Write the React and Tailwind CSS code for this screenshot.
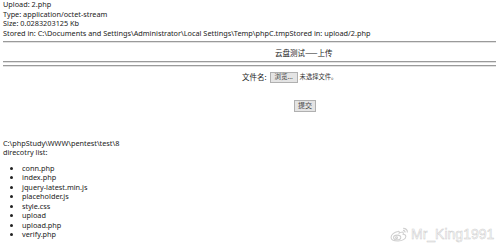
import React from 'react';

const files = [
  'conn.php',
  'index.php',
  'jquery-latest.min.js',
  'placeholder.js',
  'style.css',
  'upload',
  'upload.php',
  'verify.php',
];

const Rule = () => (
  <div className="mx-[3px] h-[2px] border-t border-[#9a9a9a] border-b border-b-[#e2e2e2]" />
);

const WeiboMark = () => (
  <svg width="19" height="15" viewBox="0 0 18 14" fill="none" stroke="#cfcfcf" strokeWidth="1">
    <path d="M7.5 4.2c-3.4 0.6-6.5 3.1-6.5 5.3 0 2.2 3 3.6 6.6 3.6 4 0 7.4-1.9 7.4-4.2 0-1.5-1.6-2-2.6-2.1 0.6-1.1 0.3-2.4-1.6-2-1.2 0.2-2.1 0.9-2.1 0.9 0.4-1.5-0.2-2-1.2-1.5z" />
    <ellipse cx="6.8" cy="9.8" rx="3.4" ry="2.2" />
    <circle cx="6.2" cy="10" r="0.9" />
    <path d="M12.5 1.2c2.3 0 4 1.7 4 3.9" />
    <path d="M12.3 3.1c1.1 0 2 0.9 2 2" />
  </svg>
);

export default function App() {
  return (
    <div className="w-[499px] h-[247px] bg-white text-[#222] text-[7.3px] leading-[9.5px] font-['Noto_Sans','Noto_Sans_CJK_SC',sans-serif] overflow-hidden relative">
      <div className="pl-[3px]">
        <div>Upload: 2.php</div>
        <div>Type: application/octet-stream</div>
        <div>Size: 0.0283203125 Kb</div>
        <div>Stored in: C:\Documents and Settings\Administrator\Local Settings\Temp\phpC.tmpStored in: upload/2.php</div>
      </div>

      <div className="mt-[3px]">
        <Rule />
      </div>
      <div className="pl-[275px] pt-[5px] pb-[3px] text-[7.5px] font-['Noto_Sans_CJK_SC',sans-serif]">云盘测试——上传</div>
      <Rule />
      <div className="mt-[2px]">
        <Rule />
      </div>

      <div className="flex items-center pl-[242px] pt-[5px] text-[7.5px] font-['Noto_Sans_CJK_SC',sans-serif]">
        <span>文件名:</span>
        <span className="ml-[3px] w-[28px] h-[11px] flex items-center justify-center bg-[#e4e4e4] border border-[#b0b0b0] text-[6.5px] text-[#444]">浏览...</span>
        <span className="ml-[2px] text-[6.3px] text-[#333]">未选择文件。</span>
      </div>

      <div className="pl-[294px] pt-[17px]">
        <span className="w-[22px] h-[12px] flex items-center justify-center bg-[#e4e4e4] border border-[#b0b0b0] text-[7px] font-['Noto_Sans_CJK_SC',sans-serif] text-[#444]">提交</span>
      </div>

      <div className="pl-[3px] pt-[27px]">
        <div>C:\phpStudy\WWW\pentest\test\8</div>
        <div>direcotry list:</div>
        <ul className="mt-[6px] pl-[19px] list-disc">
          {files.map((f) => (
            <li key={f}>{f}</li>
          ))}
        </ul>
      </div>

      <div className="absolute left-[390px] top-[227px] flex items-center gap-[2px]">
        <WeiboMark />
        <span className="text-[14px] leading-[15px] font-['Liberation_Sans',sans-serif] text-white [-webkit-text-stroke:0.5px_#cdcdcd]">Mr_King1991</span>
      </div>
    </div>
  );
}
